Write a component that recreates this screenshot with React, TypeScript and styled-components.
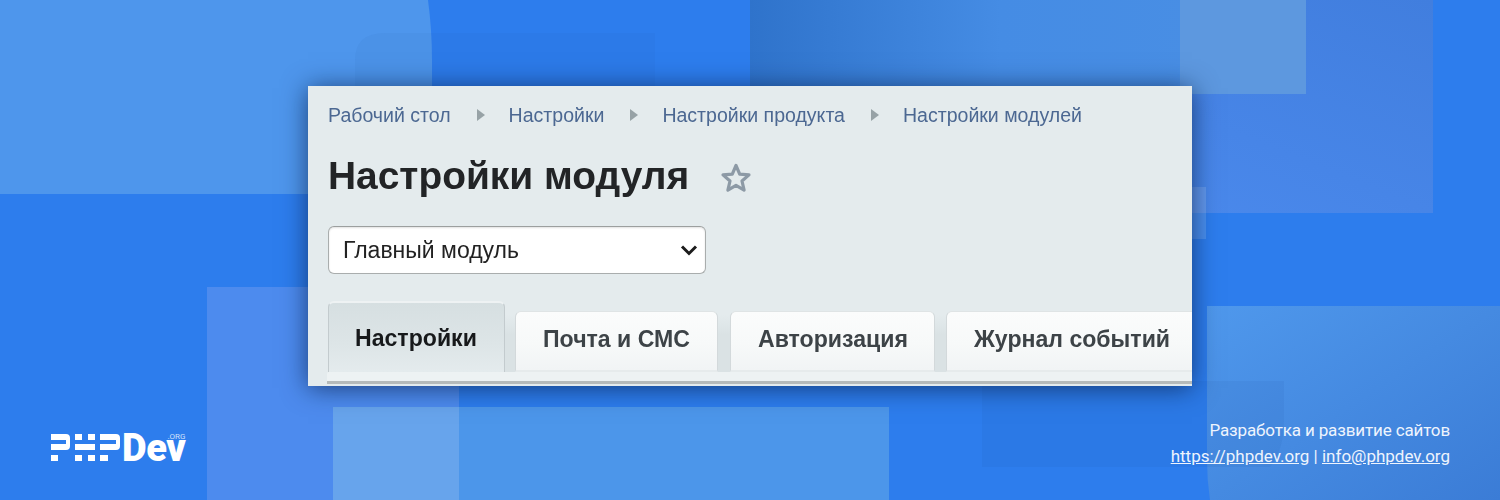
import React from "react";
import styled, { createGlobalStyle } from "styled-components";

const Global = createGlobalStyle`
  html, body { margin: 0; padding: 0; background: #2d7ded; }
`;

const Stage = styled.main`
  position: relative;
  width: 1500px;
  height: 500px;
  overflow: hidden;
  background: #2d7ded;
  display: flex;
  flex-direction: column;
  font-family: "Liberation Sans", Arial, sans-serif;
`;

const Backdrop = styled.svg`
  position: absolute;
  inset: 0;
  width: 1500px;
  height: 500px;
`;

const Panel = styled.section`
  position: relative;
  box-sizing: border-box;
  width: 884px;
  height: 300px;
  margin: 86px 0 0 308px;
  padding: 17px 0 0 20px;
  overflow: hidden;
  background: #e4ebed;
  box-shadow: 0 2px 24px rgba(8, 30, 70, 0.7);
  filter: blur(0.4px);
  flex: none;
`;

const Crumbs = styled.nav`
  display: flex;
  align-items: center;
  height: 24px;
  font-size: 19.55px;
  color: #4c6892;
  white-space: nowrap;
`;

const Arrow = styled.span`
  width: 0;
  height: 0;
  margin: 0 24px 0 26px;
  border-style: solid;
  border-width: 6.5px 0 6.5px 8px;
  border-color: transparent transparent transparent #97a2a6;
`;

const TitleRow = styled.div`
  display: flex;
  align-items: center;
  margin-top: 26px;
  height: 46px;
`;

const Title = styled.h1`
  margin: 0;
  font-size: 38.9px;
  line-height: 46px;
  font-weight: 700;
  color: #222426;
  white-space: nowrap;
`;

const Star = styled.svg`
  width: 32px;
  height: 32px;
  margin-left: 31px;
  margin-top: 4px;
  flex: none;
`;

const Select = styled.div`
  box-sizing: border-box;
  display: flex;
  align-items: center;
  justify-content: space-between;
  width: 378px;
  height: 48px;
  margin-top: 27px;
  padding: 0 7px 0 14px;
  background: #fff;
  border: 1px solid #a9adad;
  border-top-color: #9c9f9f;
  border-radius: 6px;
  box-shadow: inset 0 1px 2px rgba(0, 0, 0, 0.12);
  font-size: 23px;
  color: #222;
`;

const Chevron = styled.svg`
  width: 18px;
  height: 18px;
  flex: none;
`;

const Tabs = styled.div`
  display: flex;
  align-items: flex-end;
  margin-top: 27px;
  height: 71px;
  background: linear-gradient(180deg, transparent 14px, #dae2e4 34px);
`;

const Tab = styled.div<{ $active?: boolean; $width: number; $gap: number }>`
  box-sizing: border-box;
  flex: none;
  width: ${(p) => p.$width}px;
  margin-right: ${(p) => p.$gap}px;
  height: ${(p) => (p.$active ? 71 : 61)}px;
  padding-top: ${(p) => (p.$active ? 21 : 13)}px;
  padding-left: ${(p) => (p.$active ? 26 : 27)}px;
  border: 1px solid ${(p) => (p.$active ? "#c3cbce" : "#d3d9db")};
  border-bottom: ${(p) => (p.$active ? "none" : "2px solid #e6ebec")};
  border-top-width: ${(p) => (p.$active ? 2 : 1)}px;
  border-top-color: ${(p) => (p.$active ? "#eef2f3" : "#dfe4e5")};
  border-radius: 6px 6px 0 0;
  background: ${(p) =>
    p.$active
      ? "linear-gradient(180deg, #d6dfe1 0%, #dde5e7 60%, #e4ebed 100%)"
      : "linear-gradient(180deg, #fbfcfc 0%, #f7f9f9 55%, #f1f4f5 100%)"};
  font-size: 23.1px;
  line-height: 28px;
  font-weight: 700;
  white-space: nowrap;
  color: ${(p) => (p.$active ? "#17191b" : "#3d4347")};
`;

const TabBase = styled.div`
  height: 9px;
  margin-left: -1px;
  background: #edf2f3;
  border-bottom: 3px solid #b5baba;
  border-radius: 2px 0 0 0;
`;

const Footer = styled.footer`
  position: relative;
  flex: 1;
  display: flex;
  justify-content: space-between;
  align-items: flex-start;
  padding: 32px 50px 0 51px;
`;

const Logo = styled.div`
  position: relative;
  display: flex;
  align-items: flex-start;
  margin-top: 16px;
  height: 28px;
  color: #fff;
`;

const Mark = styled.svg`
  width: 70px;
  height: 28px;
  flex: none;
`;

const Dev = styled.span`
  font-family: Roboto, sans-serif;
  font-weight: 900;
  font-size: 38px;
  line-height: 28px;
  letter-spacing: -0.4px;
  margin-left: 1px;
`;

const Org = styled.span`
  position: absolute;
  right: 0;
  top: -1px;
  font-family: Roboto, sans-serif;
  font-size: 8px;
  line-height: 8px;
  color: #cfe0fa;
`;

const Contact = styled.div`
  font-family: Roboto, sans-serif;
  font-size: 17px;
  line-height: 26px;
  color: #eef4fd;
  text-align: right;
  margin-top: -1px;
`;

const Tagline = styled.span`
  letter-spacing: -0.14px;
`;

const Link = styled.a`
  color: inherit;
  text-decoration: underline;
`;

export default function App() {
  return (
    <Stage>
      <Global />
      <Backdrop viewBox="0 0 1500 500" aria-hidden>
        <defs>
          <linearGradient id="topBand" x1="0" y1="0" x2="1" y2="0">
            <stop offset="0" stopColor="#2f73cb" />
            <stop offset="0.45" stopColor="#458ce4" />
            <stop offset="1" stopColor="#4a8fe4" />
          </linearGradient>
          <linearGradient id="topBlock" x1="0" y1="1" x2="1" y2="0">
            <stop offset="0" stopColor="#4d8cf0" />
            <stop offset="1" stopColor="#417ede" />
          </linearGradient>
          <linearGradient id="cornerBlock" x1="0" y1="0" x2="1" y2="1">
            <stop offset="0" stopColor="#4f98ec" />
            <stop offset="1" stopColor="#3b7cd6" />
          </linearGradient>
        </defs>
        <path d="M0 0H428Q432 30 432 60V194H0Z" fill="#4e96ec" />
        <path d="M355 60Q355 33 385 33H655V200H355Z" fill="#1f4f9a" fillOpacity="0.06" />
        <rect x="207" y="287" width="252" height="213" fill="#4d8bee" />
        <rect x="333" y="407" width="556" height="93" fill="#4c96ea" />
        <rect x="333" y="407" width="126" height="93" fill="#67a4ec" />
        <rect x="750" y="0" width="556" height="94" fill="url(#topBand)" />
        <path d="M1180 0H1433V213H900V94H1180Z" fill="url(#topBlock)" />
        <rect x="1180" y="0" width="126" height="94" fill="#5d98df" />
        <rect x="1150" y="187" width="56" height="52" fill="#ffffff" fillOpacity="0.14" />
        <path d="M1207 306H1500V500H1210Q1207 480 1207 460Z" fill="url(#cornerBlock)" />
        <path d="M982 381H1284V420Q1284 450 1270 467H982Z" fill="#1f4f9a" fillOpacity="0.08" />
      </Backdrop>
      <Panel>
        <Crumbs>
          Рабочий стол<Arrow />Настройки<Arrow />Настройки продукта<Arrow />Настройки модулей
        </Crumbs>
        <TitleRow>
          <Title>Настройки модуля</Title>
          <Star viewBox="0 0 32 32">
            <path
              d="M16 3.5l3.7 8.6 9.3.8-7 6.1 2.1 9.1-8.1-4.8-8.1 4.8 2.1-9.1-7-6.1 9.3-.8z"
              fill="none"
              stroke="#8d9aa6"
              strokeWidth="3.2"
              strokeLinejoin="round"
            />
          </Star>
        </TitleRow>
        <Select>
          Главный модуль
          <Chevron viewBox="0 0 18 18">
            <path d="M2 5.5l7 7 7-7" fill="none" stroke="#1c1c1c" strokeWidth="3" />
          </Chevron>
        </Select>
        <Tabs>
          <Tab $active $width={177} $gap={10}>Настройки</Tab>
          <Tab $width={203} $gap={12}>Почта и СМС</Tab>
          <Tab $width={205} $gap={11}>Авторизация</Tab>
          <Tab $width={260} $gap={0}>Журнал событий</Tab>
        </Tabs>
        <TabBase />
      </Panel>
      <Footer>
        <Logo>
          <Mark viewBox="0 0 70 28" fill="#fff">
            <path d="M0 0H15Q19 0 19 4V12Q19 16 15 16H0V10H15V6H0ZM0 21H7V27H0ZM24 0H31V6H24ZM37 0H44V6H37ZM24 10H44V16H24ZM24 21H31V27H24ZM37 21H44V27H37ZM49 0H65Q69 0 69 4V12Q69 16 65 16H49V10H65V6H49ZM49 21H57V27H49Z" />
          </Mark>
          <Dev>Dev</Dev>
          <Org>.ORG</Org>
        </Logo>
        <Contact>
          <Tagline>Разработка и развитие сайтов</Tagline>
          <br />
          <Link href="#">https://phpdev.org</Link> | <Link href="#">info@phpdev.org</Link>
        </Contact>
      </Footer>
    </Stage>
  );
}
